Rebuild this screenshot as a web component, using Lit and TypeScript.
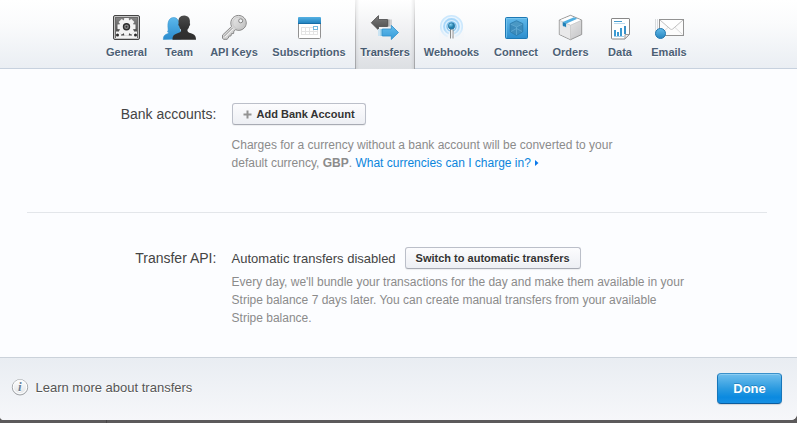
import { LitElement, html, svg, css } from "lit";
import { customElement } from "lit/decorators.js";
import { classMap } from "lit/directives/class-map.js";

const gearTeeth = [0, 45, 90, 135, 180, 225, 270, 315];

const tabs = [
  {
    label: "General", width: 53,
    icon: svg`
      <defs><linearGradient id="g1" x2="0" y2="1"><stop stop-color="#858585"/><stop offset="1" stop-color="#3a3a3a"/></linearGradient>
      <clipPath id="g2"><rect x="16" y="4" width="21" height="20"/></clipPath></defs>
      <rect x="13.500" y="1.500" width="26" height="24" rx="1.500" fill="#c4c4c4" stroke="#444"/>
      <rect x="15.500" y="3.500" width="22" height="20" fill="url(#g1)" stroke="#6a6a6a"/>
      <g clip-path="url(#g2)" fill="#f3f3f3">
        ${gearTeeth.map(a => svg`<path d="M24.300 3.800h4.400l.6 4h-5.600z" transform="rotate(${a} 26.500 12.800)"/>`)}
        <circle cx="26.500" cy="12.800" r="6.900"/>
        <circle cx="17.500" cy="21" r="3.600"/><circle cx="35.500" cy="21" r="3.600"/>
        <path d="M20 21.500h13V24H20z"/>
      </g>
      <circle cx="26.500" cy="12.800" r="3" fill="#8a8a8a" stroke="#2c2c2c" stroke-width="1.400"/><circle cx="26.500" cy="12.800" r="1" fill="#333"/>
      <circle cx="17.500" cy="21" r="1.500" fill="#2a2a2a"/><circle cx="35.500" cy="21" r="1.500" fill="#2a2a2a"/>`,
  },
  {
    label: "Team", width: 52,
    icon: svg`
      <defs><linearGradient id="t1" x2="0" y2="1"><stop stop-color="#5cb8ec"/><stop offset="1" stop-color="#2a8bcd"/></linearGradient>
      <linearGradient id="t2" x2="0" y2="1"><stop stop-color="#4c4c4c"/><stop offset=".5" stop-color="#333"/><stop offset="1" stop-color="#2e2e2e"/></linearGradient></defs>
      <path d="M10.300 25.500c.2-4 1.500-4.700 4.200-5.700 1.500-.6 1.200-1.200 0-2 1.200-1.800.3-3 .4-6.500C15 6.500 17 3.500 20.700 3.500c3.500 0 5.600 3.500 5.900 7.500.2 3.500.2 6 1.700 8v6z" fill="url(#t1)" stroke="#3a97d0" stroke-width=".6"/>
      <path d="M19.500 25.700c0-4 1.600-5.300 5-6.400 3-.9 3.700-1.500 3.500-3.500-1-.9-1.500-2-1.800-3.500-1-.7-1.100-2.500-.5-3C24.800 4 27 1.800 31.200 1.500c4.300.2 6.300 3.200 5.600 7.800.6.500.4 2.300-.6 3-.4 1.700-.9 2.700-1.800 3.500-.1 2 .8 2.700 3.600 3.500 3.500 1.100 5 2.500 5 6.400z" fill="url(#t2)"/>`,
  },
  {
    label: "API Keys", width: 58,
    icon: svg`
      <defs><linearGradient id="k1" x2="1" y2="1"><stop stop-color="#f6f6f6"/><stop offset="1" stop-color="#b4b4b4"/></linearGradient></defs>
      <path d="M26.500 12.500c-1.300-3-.8-6.500 1.500-8.800 3-3 8-3 11 0s3 7.500 0 10.500c-2.400 2.300-5.500 2.700-8.400 1.500l-1.800 1.600-.2 2.200-2.200.2-.4 2.200-2 .2-.7 2-1.300 1.200H18.500l-1-1.200v-3z" fill="url(#k1)" stroke="#888"/>
      <path d="M19 22.500l8.700-8.700" stroke="#a0a0a0" fill="none"/><path d="M20 23.200l8.500-8.500" stroke="#fff" stroke-width=".8"/>
      <circle cx="33.500" cy="9" r="5.800" fill="none" stroke="#c4c4c4" stroke-width=".8"/>
      <circle cx="35.700" cy="6.800" r="2" fill="#f4f6f8" stroke="#858585"/>`,
  },
  {
    label: "Subscriptions", width: 92,
    icon: svg`
      <defs><linearGradient id="s1" x2="0" y2="1"><stop stop-color="#55b1e3"/><stop offset="1" stop-color="#1b7dbb"/></linearGradient></defs>
      <rect x="35.500" y="4.500" width="22" height="20" rx="1" fill="#fff" stroke="#929292"/>
      <path d="M35 4q0-1 1-1h21q1 0 1 1v6H35z" fill="url(#s1)"/><path d="M35 9.500h23" stroke="#176da6"/>
      <path d="M38 13.500h17M38 17.500h17M38 20.500h17M38.500 13v8M42.500 13v8M46.500 13v8M50.500 13v8M54.500 13v8" stroke="#e4e4e4" fill="none"/>
      <rect x="50.500" y="12.500" width="4" height="3" fill="#fff" stroke="#72b9df"/>`,
  },
  {
    label: "Transfers", width: 60, active: true,
    icon: svg`
      <defs><linearGradient id="a1" x2="0" y2="1"><stop stop-color="#7c7c7c"/><stop offset="1" stop-color="#4c4c4c"/></linearGradient>
      <linearGradient id="a2" x2="0" y2="1"><stop stop-color="#65bdec"/><stop offset="1" stop-color="#369bd9"/></linearGradient></defs>
      <path d="M33 5.500h4v7h-4z" fill="#d0d1d3"/><path d="M32.500 5.500h2v7h-2z" fill="#a6a6a6"/>
      <path d="M16.300 8.800l7.200-7.200v3.900h9v7h-9V16z" fill="url(#a1)" stroke="#4a4a4a" stroke-width=".8"/>
      <path d="M23 15h3v7h-3z" fill="#c9e3f2"/><path d="M25.500 15h2v7h-2z" fill="#8ccaea"/>
      <path d="M43.500 18.500l-7.200-7.200v3.700h-9v7h9v3.500z" fill="url(#a2)" stroke="#2d8fcb" stroke-width=".8"/>`,
  },
  {
    label: "Webhooks", width: 73,
    icon: svg`
      <defs><radialGradient id="w1" cx=".35" cy=".25"><stop stop-color="#8bd6f6"/><stop offset="1" stop-color="#2380ad"/></radialGradient>
      <linearGradient id="w2" x2="0" y2="1"><stop stop-color="#f3f6f9" stop-opacity="0"/><stop offset="1" stop-color="#f3f6f9"/></linearGradient></defs>
      <circle cx="36.500" cy="12.500" r="10.800" fill="#e8f5ff" stroke="#cce8fd" stroke-width="1.600"/>
      <circle cx="36.500" cy="12.500" r="7.500" fill="#daeffe" stroke="#a8d7f9" stroke-width="1.800"/>
      <circle cx="36.500" cy="12.500" r="4.500" fill="#eaf7ff" stroke="#76bdea" stroke-width="1.300"/>
      <path d="M24 14h25v13H24z" fill="url(#w2)"/>
      <path d="M36.500 13l-5 13h10z" fill="#f3f6f9"/>
      <path d="M35.500 15v9.500M38 15v9.500" stroke="#8c8c8c"/><path d="M36.700 15v7" stroke="#eee"/>
      <circle cx="36.500" cy="12" r="3.200" fill="url(#w1)" stroke="#276f99" stroke-width=".7"/>`,
  },
  {
    label: "Connect", width: 56,
    icon: svg`
      <defs><linearGradient id="c1" x2="0" y2="1"><stop stop-color="#62b9ea"/><stop offset="1" stop-color="#2b8dcd"/></linearGradient></defs>
      <rect x="17.500" y="3.500" width="22" height="21" rx="1" fill="url(#c1)" stroke="#1d78b4"/>
      <path d="M18.500 23.500v-19h20" fill="none" stroke="#80cbf2" stroke-width=".7"/>
      <path d="M28.500 6.700l6.300 3v8.100l-6.300 3.700-6.300-3.700V9.700z" fill="#3c8bbb" stroke="#2c7aaa" stroke-width=".8"/>
      <path d="M28.500 7.300l5.600 2.700-5.600 2.700L23 10z" fill="#4a98c4"/>
      <path d="M22.700 10.200l5.800 2.700 5.800-2.700M28.500 13v8M23 17.500l5.500-3 5.500 3" fill="none" stroke="#69b0d8" stroke-width=".7"/>`,
  },
  {
    label: "Orders", width: 53,
    icon: svg`
      <defs><linearGradient id="o1" x2="1" y2="1"><stop stop-color="#f5f5f5"/><stop offset="1" stop-color="#c4c4c6"/></linearGradient></defs>
      <path d="M26.500 1.300L37.700 6v14.500l-11.200 5.200-11.200-5.200V6z" fill="url(#o1)" stroke="#8f8f8f" stroke-width=".9"/>
      <path d="M26.500 2l10.500 4.300-10.500 4.800L16 6.300z" fill="#fff"/>
      <path d="M26.500 11.300v14l-10.700-5V7z" fill="#e9e9ea"/>
      <path d="M15.800 6.500l10.700 4.800 10.700-4.800M26.500 11.300v14" fill="none" stroke="#c4c4c4" stroke-width=".7"/>
      <path d="M18.800 8L30 3.200l3.300 1.500-11.200 5z" fill="#51afe1"/><path d="M18.700 8l3.400 1.600v4l-1.300-1.300-.8.500-1.300-1.300z" fill="#1f80b8"/>`,
  },
  {
    label: "Data", width: 46,
    icon: svg`
      <path d="M15 4.500h17q.5 0 .5.500v15.500l-4.500 4.500H15.500q-1 0-1-1V5q0-.5.500-.5z" fill="#fff" stroke="#888"/>
      <path d="M28 24.800V20.500h4.300z" fill="#f2f2f2" stroke="#999"/>
      <path d="M17 7.500h8" stroke="#479bcd"/><path d="M17 9.500h11" stroke="#bcdcf0"/>
      <path d="M18 16v6M21 18v4M24 14v8" stroke="#3a9ad2" stroke-width="2"/><path d="M28 12v8" stroke="#3a90c6" stroke-width="2"/>
      <path d="M17 22.500h10" stroke="#a9d0e8"/>`,
  },
  {
    label: "Emails", width: 52,
    icon: svg`
      <defs><linearGradient id="e1" x2="0" y2="1"><stop stop-color="#62bcea"/><stop offset="1" stop-color="#2784bf"/></linearGradient></defs>
      <path d="M12.500 5v16M14.500 5v16" stroke="#d9dcdf"/>
      <rect x="16.500" y="5.500" width="24" height="16" fill="#fcfcfc" stroke="#929292"/>
      <path d="M17.500 20.500l8-7.500M39.500 20.500l-8-7.500" stroke="#dcdcdc" fill="none"/>
      <path d="M17 6l10.300 9q1.200.9 2.400 0L40 6" fill="#fff" stroke="#c0c0c0"/>
      <circle cx="17.500" cy="19.500" r="5" fill="url(#e1)" stroke="#2379b1"/>`,
  },
];

@customElement("app-root")
export class AppRoot extends LitElement {
  static styles = css`
    :host { display: flex; flex-direction: column; height: 423px; box-sizing: border-box; overflow: hidden; background: linear-gradient(90deg, #5c5a5b 106px, #484647 106px 107px, #5c5a5b 107px); font-family: "Liberation Sans", Arial, sans-serif; color: #444; }
    .sheet { display: flex; flex-direction: column; height: 420px; border-radius: 0 0 6px 4px; overflow: hidden; background: #fcfdff; }
    .tabs { display: flex; box-sizing: border-box; height: 69px; padding-left: 100px; border-bottom: 1px solid #c7d1de; background: linear-gradient(#fff, #fafbfc 35%, #eaeef3); }
    .tab { display: flex; flex: none; flex-direction: column; align-items: center; box-sizing: border-box; height: 69px; padding-top: 14px; font-size: 11px; line-height: 14px; font-weight: 700; color: #4c6075; text-shadow: 0 1px 0 #fff; white-space: nowrap; }
    .tab svg { display: block; height: 28px; margin-bottom: 3px; }
    .active { color: #465a70; background: linear-gradient(90deg, #00000010, #0000 3px calc(100% - 3px), #00000010), linear-gradient(#fff, #eeeff1 50%, #dcdfe3); border: solid; border-width: 0 1px; border-image: linear-gradient(#f4f4f4, #b8b8ba 50%, #a2a4a8) 1; }
    .active svg { margin-left: -1px; margin-right: -1px; }
    .section { display: grid; grid-template-columns: 216.4px 1fr; column-gap: 15.2px; box-sizing: border-box; }
    .bank { height: 143px; margin: 0; padding-top: 34px; }
    .rule { height: 1px; margin: 0 30px 0 27px; background: #e3e6ea; }
    .api { height: 144px; padding-top: 34px; }
    .label { text-align: right; font-size: 14px; line-height: 22px; color: #444; }
    .row { display: flex; align-items: center; height: 22px; gap: 9px; font-size: 13px; white-space: nowrap; }
    .button { display: flex; align-items: center; box-sizing: border-box; height: 22px; padding: 0 10px; border: 1px solid #bbbfc9; border-bottom-color: #a8abb4; border-radius: 3px; background: linear-gradient(#fcfcfe, #edeff4); font: 700 11px "Liberation Sans", sans-serif; color: #333; text-shadow: 0 1px 0 #fff; box-shadow: 0 1px 1px #00000010; }
    .button svg { margin-right: 5px; }
    .text { margin: 0; font-size: 12px; line-height: 18px; color: #8b8b8b; white-space: nowrap; }
    .bank .text { margin-top: 11px; }
    .api .text { margin-top: 4px; }
    .link { color: #0b85dc; text-decoration: none; }
    .footer { display: flex; flex: 1; align-items: center; justify-content: space-between; box-sizing: border-box; border-top: 1px solid #cbd2da; padding: 0 15px 1px 11px; background: linear-gradient(#e9edf2, #f6f7fa); }
    .learn { display: flex; align-items: center; gap: 6.500px; margin-bottom: 3px; font-size: 13px; color: #555; text-shadow: 0 1px 0 #fff; }
    .learn svg { display: block; }
    .info { font: italic 700 13px "Liberation Serif", serif; fill: #698098; }
    .done { box-sizing: border-box; width: 65px; height: 31px; padding: 0; border: 1px solid #1473b6; border-color: #3a91cb #1676ba #0b5c9e; border-radius: 4px; background: linear-gradient(#6fbeed, #2c9be0 50%, #0b8ae0 80%, #1790e4); box-shadow: inset 0 1px 0 #8bcdf2, 0 1px 1px #0002; font: 700 13px "Liberation Sans", sans-serif; color: #fff; text-shadow: 0 -1px 0 #0a63a080; }
  `;

  render() {
    return html`
      <div class="sheet">
        <nav class="tabs">
          ${tabs.map(t => html`
            <div class=${classMap({ tab: true, active: !!t.active })} style="width:${t.width}px">
              <svg width=${t.width} height="28" viewBox="0 0 ${t.width} 28">${t.icon}</svg>
              <span>${t.label}</span>
            </div>`)}
        </nav>
        <section class="section bank">
          <div class="label">Bank accounts:</div>
          <div>
            <div class="row"><button class="button"><svg width="9" height="9" viewBox="0 0 9 9"><path d="M4.500 .5v8M.5 4.500h8" stroke="#939393" stroke-width="2"/></svg>Add Bank Account</button></div>
            <p class="text">Charges for a currency without a bank account will be converted to your<br>default currency, <b>GBP</b>. <a class="link">What currencies can I charge in? <svg width="6" height="8" viewBox="0 0 6 8"><path d="M1 1l3.500 3L1 7z" fill="#0b78ea"/></svg></a></p>
          </div>
        </section>
        <div class="rule"></div>
        <section class="section api">
          <div class="label">Transfer API:</div>
          <div>
            <div class="row"><span>Automatic transfers disabled</span><button class="button">Switch to automatic transfers</button></div>
            <p class="text">Every day, we'll bundle your transactions for the day and make them available in your<br>Stripe balance 7 days later. You can create manual transfers from your available<br>Stripe balance.</p>
          </div>
        </section>
        <footer class="footer">
          <div class="learn">
            <svg width="18" height="18" viewBox="0 0 18 18">
              <defs><linearGradient id="i1" x2="0" y2="1"><stop stop-color="#fff"/><stop offset="1" stop-color="#dfe2e5"/></linearGradient></defs>
              <circle cx="9" cy="9.300" r="7.700" fill="url(#i1)" stroke="#a0a3a6"/><circle cx="9" cy="8.800" r="6.700" fill="none" stroke="#fff"/>
              <text class="info" x="7" y="13">i</text>
            </svg>
            <span>Learn more about transfers</span>
          </div>
          <button class="done">Done</button>
        </footer>
      </div>`;
  }
}
